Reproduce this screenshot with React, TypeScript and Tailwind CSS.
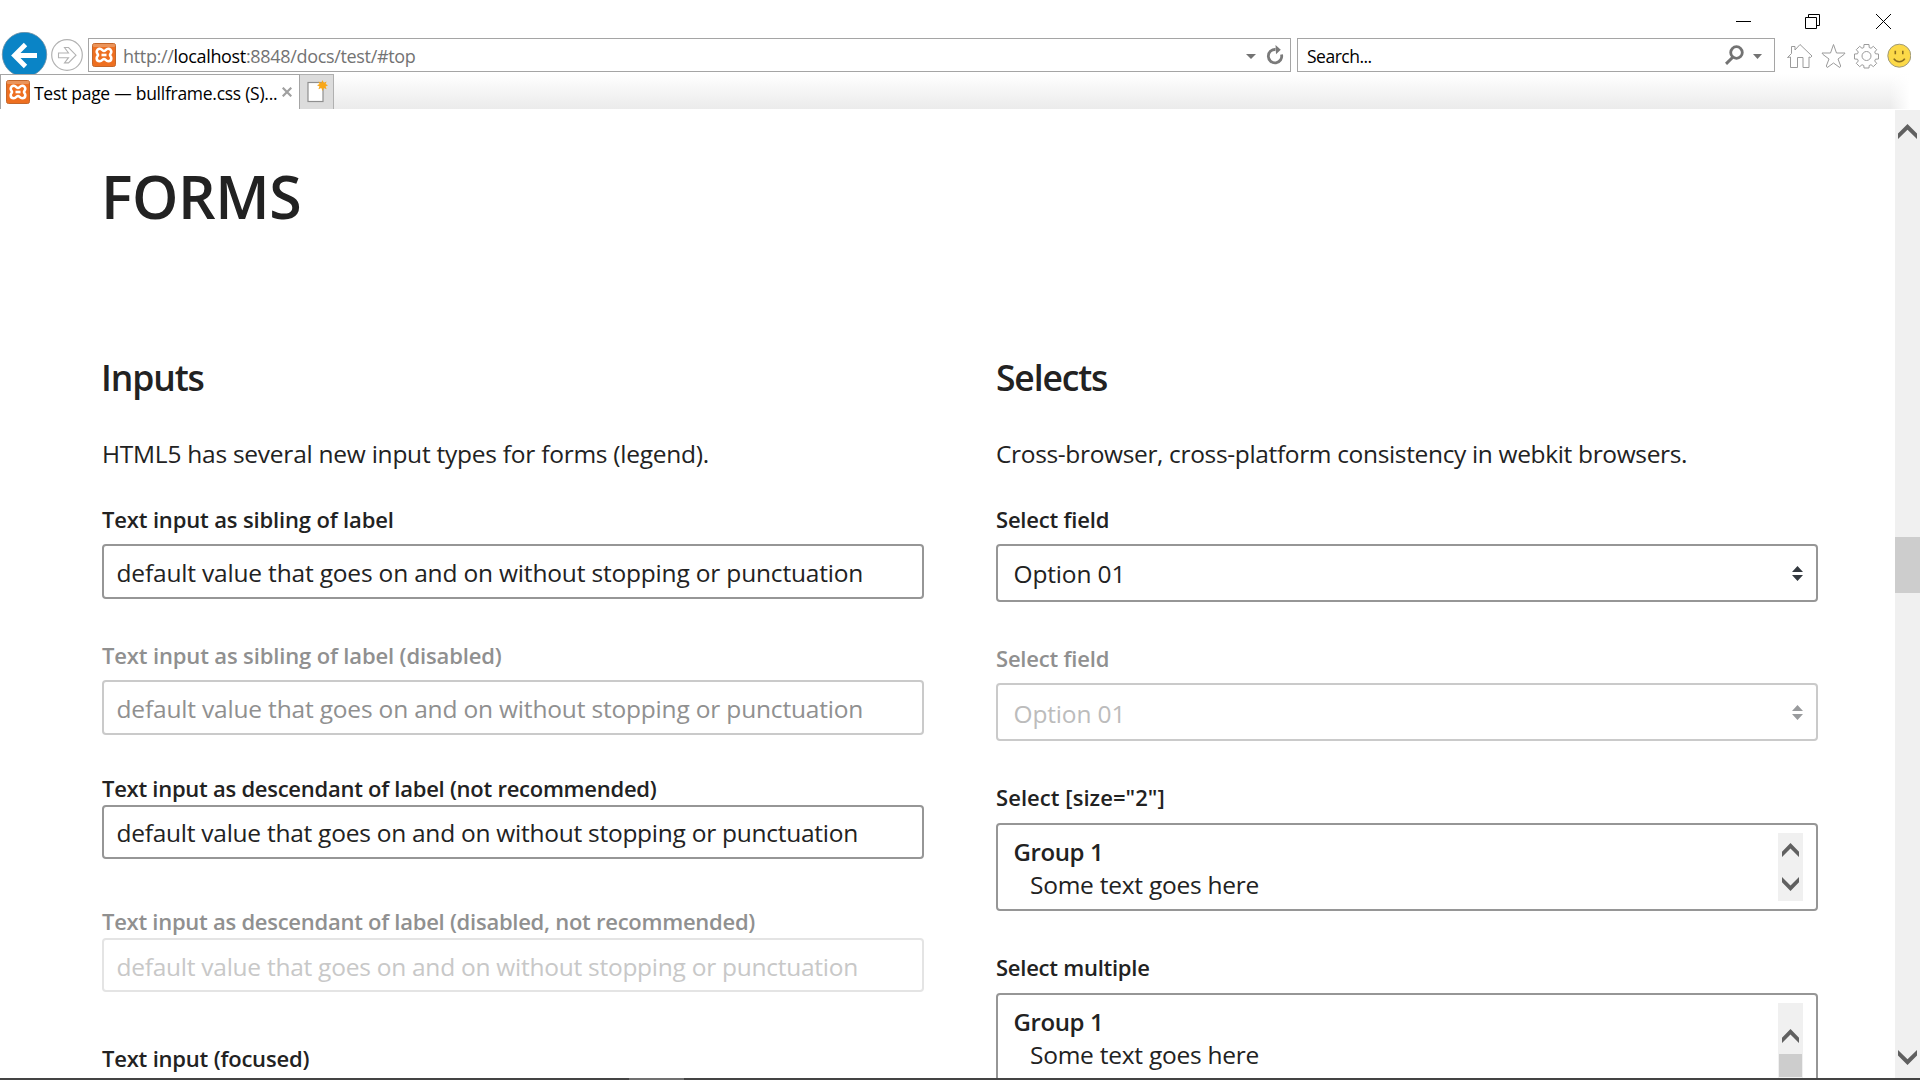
import type { ReactNode } from "react";

const VALUE = "default value that goes on and on without stopping or punctuation";

function SiteIcon() {
  return (
    <svg width="24" height="24" viewBox="0 0 24 24" className="shrink-0">
      <rect x="0.5" y="0.5" width="23" height="23" rx="2" fill="#ee6f20" stroke="#c4672b" />
      <rect x="1" y="1" width="22" height="3" rx="1" fill="#e9a06d" opacity="0.75" />
      <path
        d="M12 8C10.600 8 10 5.800 7.800 5.800 6 5.800 4.700 7 4.700 8.800 4.700 10.500 6 10.800 6 12s-1.300 1.500-1.300 3.200c0 1.800 1.300 3 3.100 3 2.200 0 2.800-2.200 4.200-2.200s2 2.200 4.200 2.200c1.800 0 3.100-1.200 3.100-3C19.300 13.500 18 13.200 18 12s1.300-1.500 1.300-3.200c0-1.800-1.300-3-3.100-3C14 5.800 13.400 8 12 8z"
        fill="none"
        stroke="#fff"
        strokeWidth="2.600"
      />
      <path d="M9.500 12h5" stroke="#fff" strokeWidth="2.600" />
    </svg>
  );
}

function Chevron({ up = false, small = false }: { up?: boolean; small?: boolean }) {
  return (
    <svg
      width={small ? 17 : 19}
      height={small ? 14 : 15}
      viewBox="0 0 19 15"
      preserveAspectRatio="none"
      className={up ? "block" : "block rotate-180"}
    >
      <path d="M9.500 0 19 9.500V15L9.500 5.800 0 15V9.500z" fill="#606060" />
    </svg>
  );
}

function Label({ children, className = "" }: { children: ReactNode; className?: string }) {
  return <div className={`h-6 whitespace-nowrap text-[22px] font-semibold leading-6 ${className}`}>{children}</div>;
}

function TextField({ className, textClass }: { className: string; textClass: string }) {
  return (
    <div className={`flex items-center whitespace-nowrap rounded border-2 pl-[12.5px] text-[24.5px] leading-8 ${className}`}>
      <span className={textClass}>{VALUE}</span>
    </div>
  );
}

function SelectField({ disabled = false }: { disabled?: boolean }) {
  return (
    <div
      className={`mt-[13px] flex h-[58px] items-center justify-between rounded border-2 pl-[15.5px] pr-[13px] ${
        disabled ? "border-[#cacaca] text-[#bcbcbc]" : "border-[#969696]"
      }`}
    >
      <span className={`text-[24.5px] leading-8 tracking-[-0.15px] ${disabled ? "pt-[3px]" : "pt-px"}`}>Option 01</span>
      <svg width="11" height="15" viewBox="0 0 11 15" fill={disabled ? "#999b9d" : "#343a40"}>
        <path d="M5.500 0 11 6H0zM0 9h11l-5.500 6z" />
      </svg>
    </div>
  );
}

function ListBox({ className, children }: { className: string; children: ReactNode }) {
  return (
    <div className={`mt-[14px] flex justify-between rounded border-2 border-[#969696] pl-[15.5px] pr-[13px] pt-2 ${className}`}>
      <div className="whitespace-nowrap pt-px text-[24.5px] leading-[33px]">
        <div className="pt-px text-[24px] font-semibold tracking-[-0.4px]">Group 1</div>
        <div className="pl-[16.5px] tracking-[-0.25px]">Some text goes here</div>
      </div>
      {children}
    </div>
  );
}

function TitleBar() {
  return (
    <div className="flex h-8 justify-end pr-[29px] pt-[14px]">
      <svg width="155" height="15" viewBox="0 0 155 15" fill="none" stroke="#000">
        <path d="M0 7.500h15" />
        <path d="M69.500 3.500h11v11h-11zM72.500 3V.5h11v11H81" />
        <path d="M140 0l15 15M155 0l-15 15" />
      </svg>
    </div>
  );
}

function NavBar() {
  return (
    <div className="flex h-[42px] items-start overflow-hidden">
      <svg width="88" height="46" viewBox="0 0 88 46" className="shrink-0" fill="none">
        <circle cx="24.500" cy="22.500" r="22.200" fill="#0a84c6" stroke="#6f8fa3" strokeWidth="0.800" />
        <path d="M37 23.500H15M25.500 12.500l-11 11 11 11" stroke="#fff" strokeWidth="4.800" />
        <circle cx="67" cy="23" r="15.300" stroke="#b2b2b2" strokeWidth="1.200" />
        <path d="M58.500 21h10l-4-5.500h4l7.500 7.700-7.500 7.700h-4l4-5.200h-10z" stroke="#b2b2b2" strokeWidth="1.100" />
      </svg>
      <div className="mt-[6px] flex h-[34px] w-[1203px] shrink-0 items-center border border-[#a5a5a5] pl-[3px]">
        <SiteIcon />
        <span className="ml-[7px] whitespace-nowrap pt-[2px] text-[18px] leading-6 tracking-[-0.33px] text-[#737373]">
          http://<span className="text-black">localhost</span>:8848/docs/test/#top
        </span>
        <svg width="38" height="20" viewBox="0 0 38 20" className="ml-auto mr-[6px]">
          <path d="M0 9h10l-5 5z" fill="#737373" />
          <path d="M29.500 4.500A6.700 6.700 0 1 0 35.500 9.500" fill="none" stroke="#7a7a7a" strokeWidth="2.800" />
          <path d="M29.500 0l5.300 4.700-4.800 4.500z" fill="#7a7a7a" />
        </svg>
      </div>
      <div className="ml-[6px] mt-[6px] flex h-[34px] w-[478px] shrink-0 items-center border border-[#a5a5a5] pl-[9px]">
        <span className="pt-[2px] text-[17.5px] leading-6 tracking-[-0.5px] text-black">Search...</span>
        <svg width="37" height="20" viewBox="0 0 37 20" className="ml-auto mr-[12px]">
          <circle cx="11.500" cy="7.500" r="5.800" fill="none" stroke="#737373" strokeWidth="2.800" />
          <path d="M7.500 12.500l-6.500 6.300" stroke="#737373" strokeWidth="3" />
          <path d="M28 9h9l-4.500 5z" fill="#737373" />
        </svg>
      </div>
      <svg width="125" height="26" viewBox="0 0 125 26" className="ml-[10.5px] mt-[11px] shrink-0" fill="none" stroke="#9b9b9b">
        <path d="M1.500 14.500 5.500 10.500V3.500h3.500v3.500L14 1.500l12 11.500-1.500 1.500-1.500-.5V24.500h-6V14.500h-5.500v10H4.500V14z" />
        <path d="M47.500 1.500l3 8.500h8.500l-1 1.500-6 4.500 2.700 7-1 1.500-6.200-4.500-6.200 4.500-1-1.500 2.700-7-6-4.500-1-1.500h8.500z" />
        <path d="M77.800 4.500 78 1.500h5l.2 3 1.800.8 2.300-2 3.400 3.400-2 2.300.8 1.800 3 .2v5l-3 .2-.8 1.800 2 2.300-3.400 3.400-2.300-2-1.800.8-.2 2.500h-5l-.2-2.500-1.800-.8-2.300 2-3.400-3.400 2-2.300-.8-1.800-3-.2v-5l3-.2.8-1.800-2-2.300 3.400-3.400 2.300 2z" />
        <circle cx="80.500" cy="13" r="4.500" />
        <circle cx="113.300" cy="12.700" r="11.500" fill="#fcd948" stroke="#a09a78" />
        <path d="M109.300 7.700v3.500M116.800 7.700v3.500" stroke="#8b6e20" strokeWidth="1.600" />
        <path d="M107.800 15.700c2.500 4 8.500 4 11 0" stroke="#8b6e20" strokeWidth="1.600" />
      </svg>
    </div>
  );
}

function TabBar() {
  return (
    <div className="flex h-[35px]">
      <div className="flex w-[300px] shrink-0 items-center border-x border-t border-[#a5a5a5] pl-[5px]">
        <SiteIcon />
        <span className="ml-[4px] whitespace-nowrap pt-[2px] text-[17.500px] leading-6 tracking-[-0.27px] text-black">
          Test page — bullframe.css (S)...
        </span>
        <svg width="10" height="10" viewBox="0 0 10 10" className="ml-auto mr-[7px]" stroke="#a0a0a0" strokeWidth="2.200">
          <path d="M.7.7l8.600 8.600M9.300.7.7 9.300" />
        </svg>
      </div>
      <div className="flex w-[34px] shrink-0 justify-center border-r border-t border-[#b0b0b0] bg-[#dcdcdc] pt-[5px]">
        <svg width="22" height="24" viewBox="0 0 22 24" className="ml-[3px]">
          <rect x="1" y="2.500" width="15" height="19" fill="#fff" stroke="#8f8f8f" strokeWidth="1.200" />
          <path
            d="M15.500 0l1.200 2.700 2.900-1.200-1 2.600 2.400 1.200-2.400 1.200 1 2.800-2.900-1.200-1.200 2.900-1.200-2.900-2.900 1.200 1.100-2.800L10 5.300l2.500-1.200-1.100-2.600 2.900 1.200z"
            fill="#f8a718"
          />
        </svg>
      </div>
      <div className="mr-[10px] flex grow bg-linear-to-b from-white to-[#ebebeb]">
        <div className="ml-auto w-5 bg-linear-to-r from-white/0 to-white" />
      </div>
    </div>
  );
}

export default function App() {
  return (
    <div className="flex h-[1080px] w-[1920px] flex-col overflow-hidden bg-white font-['Open_Sans',sans-serif] text-[#222222]">
      <TitleBar />
      <NavBar />
      <TabBar />
      <div className="flex h-[969px] overflow-hidden">
        <main className="w-[1895px] shrink-0 pl-[102px] pt-[47px]">
          <h1 className="-ml-px h-20 text-[59px] font-semibold leading-[80px] tracking-[-0.4px]">FORMS</h1>
          <div className="mt-[121px] flex gap-[72px]">
            <section className="w-[822px]">
              <h2 className="-ml-px h-10 text-[35.500px] font-semibold leading-10 tracking-[-1.1px]">Inputs</h2>
              <p className="mt-[41px] h-8 whitespace-nowrap text-[24.500px] leading-8 tracking-[-0.25px]">
                HTML5 has several new input types for forms (legend).
              </p>
              <Label className="mt-[37px] tracking-[-0.15px]">Text input as sibling of label</Label>
              <TextField className="mt-[13px] h-[55px] border-[#969696] pt-[2px]" textClass="tracking-[-0.18px]" />
              <Label className="mt-11 tracking-[-0.14px] text-[#909090]">Text input as sibling of label (disabled)</Label>
              <TextField className="mt-[13px] h-[55px] border-[#cacaca] pt-[2px] text-[#909090]" textClass="tracking-[-0.18px]" />
              <Label className="mt-[41px] tracking-[-0.26px]">Text input as descendant of label (not recommended)</Label>
              <TextField className="mt-[5px] h-[54px] border-[#969696] pt-px" textClass="tracking-[-0.26px]" />
              <Label className="mt-[50px] tracking-[-0.26px] text-[#909090]">
                Text input as descendant of label (disabled, not recommended)
              </Label>
              <TextField className="mt-[5px] h-[54px] border-[#e4e4e4] pt-[3px] text-[#c8c8c8]" textClass="tracking-[-0.26px]" />
              <Label className="mt-[54px] tracking-[-0.2px]">Text input (focused)</Label>
            </section>
            <section className="w-[822px]">
              <h2 className="h-10 text-[35.500px] font-semibold leading-10 tracking-[-1.15px]">Selects</h2>
              <p className="mt-[41px] h-8 whitespace-nowrap text-[24.500px] leading-8 tracking-[-0.345px]">
                Cross-browser, cross-platform consistency in webkit browsers.
              </p>
              <Label className="mt-[37px] tracking-[-0.2px]">Select field</Label>
              <SelectField />
              <Label className="mt-11 tracking-[-0.2px] text-[#909090]">Select field</Label>
              <SelectField disabled />
              <Label className="mt-11 tracking-[0.06px]">Select [size="2"]</Label>
              <ListBox className="h-[88px]">
                <div className="flex h-[68px] w-[25px] flex-col items-center justify-between bg-[#f0f0f0] pb-[10px] pt-[10px]">
                  <Chevron up small />
                  <Chevron small />
                </div>
              </ListBox>
              <Label className="mt-11 tracking-[-0.25px]">Select multiple</Label>
              <ListBox className="h-[200px]">
                <div className="flex w-[25px] flex-col items-center bg-[#f0f0f0] pt-[26px]">
                  <Chevron up small />
                  <div className="mt-[11px] h-[23px] w-[23px] bg-[#cdcdcd]" />
                </div>
              </ListBox>
            </section>
          </div>
        </main>
        <div className="mt-px flex w-[25px] shrink-0 flex-col items-center bg-[#f0f0f0] pb-[13px] pt-[14px]">
          <Chevron up />
          <div className="mt-[398px] h-14 w-full bg-[#cdcdcd]" />
          <div className="mt-auto">
            <Chevron />
          </div>
        </div>
      </div>
      <div className="flex h-[2px] bg-[#444444]">
        <div className="ml-[629px] w-[55px] bg-[#707070]" />
      </div>
    </div>
  );
}
